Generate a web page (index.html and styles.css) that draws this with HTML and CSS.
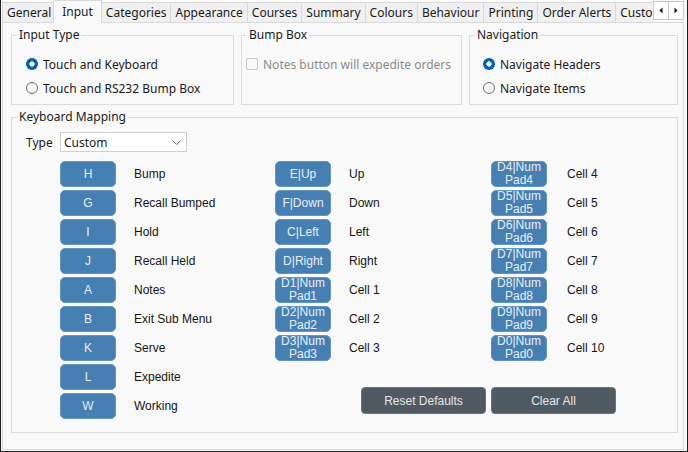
FILE: index.html
```html
<!DOCTYPE html>
<html lang="en">
<head>
<meta charset="utf-8">
<title>Input Settings</title>
<link rel="stylesheet" href="styles.css">
</head>
<body>
<div class="tabstrip">
  <div class="tabs">
    <div class="tab">General</div>
    <div class="tab active">Input</div>
    <div class="tab">Categories</div>
    <div class="tab">Appearance</div>
    <div class="tab">Courses</div>
    <div class="tab">Summary</div>
    <div class="tab">Colours</div>
    <div class="tab">Behaviour</div>
    <div class="tab">Printing</div>
    <div class="tab">Order Alerts</div>
    <div class="tab">Customer Display</div>
  </div>
  <div class="tab-scroll">
    <span class="scroll-btn"><svg width="4" height="7" viewBox="0 0 4 7"><path d="M3.5 0.5 L0.5 3.5 L3.5 6.5 Z" fill="#111"/></svg></span>
    <span class="scroll-btn"><svg width="4" height="7" viewBox="0 0 4 7"><path d="M0.5 0.5 L3.5 3.5 L0.5 6.5 Z" fill="#111"/></svg></span>
  </div>
</div>
<main class="panel">
  <div class="top-row">
    <section class="group">
      <h2 class="group-title">Input Type</h2>
      <label class="option"><span class="radio on"></span>Touch and Keyboard</label>
      <label class="option"><span class="radio"></span>Touch and RS232 Bump Box</label>
    </section>
    <section class="group bump">
      <h2 class="group-title">Bump Box</h2>
      <label class="option disabled"><span class="check"></span>Notes button will expedite orders</label>
    </section>
    <section class="group nav">
      <h2 class="group-title">Navigation</h2>
      <label class="option"><span class="radio on"></span>Navigate Headers</label>
      <label class="option"><span class="radio"></span>Navigate Items</label>
    </section>
  </div>
  <section class="group mapping">
    <h2 class="group-title">Keyboard Mapping</h2>
    <div class="type-row">
      <span class="type-label">Type</span>
      <div class="select"><span>Custom</span><svg class="chev" width="9" height="5" viewBox="0 0 9 5"><path d="M0.5 0.5 L4.5 4.5 L8.5 0.5" fill="none" stroke="#6a6a6a" stroke-width="1"/></svg></div>
    </div>
    <div class="map">
      <div class="col">
        <div class="key-row"><span class="key">H</span><span class="key-label">Bump</span></div>
        <div class="key-row"><span class="key">G</span><span class="key-label">Recall Bumped</span></div>
        <div class="key-row"><span class="key">I</span><span class="key-label">Hold</span></div>
        <div class="key-row"><span class="key">J</span><span class="key-label">Recall Held</span></div>
        <div class="key-row"><span class="key">A</span><span class="key-label">Notes</span></div>
        <div class="key-row"><span class="key">B</span><span class="key-label">Exit Sub Menu</span></div>
        <div class="key-row"><span class="key">K</span><span class="key-label">Serve</span></div>
        <div class="key-row"><span class="key">L</span><span class="key-label">Expedite</span></div>
        <div class="key-row"><span class="key">W</span><span class="key-label">Working</span></div>
      </div>
      <div class="right">
        <div class="cols">
          <div class="col col2">
            <div class="key-row"><span class="key">E|Up</span><span class="key-label">Up</span></div>
            <div class="key-row"><span class="key">F|Down</span><span class="key-label">Down</span></div>
            <div class="key-row"><span class="key">C|Left</span><span class="key-label">Left</span></div>
            <div class="key-row"><span class="key">D|Right</span><span class="key-label">Right</span></div>
            <div class="key-row"><span class="key">D1|Num<br>Pad1</span><span class="key-label">Cell 1</span></div>
            <div class="key-row"><span class="key">D2|Num<br>Pad2</span><span class="key-label">Cell 2</span></div>
            <div class="key-row"><span class="key">D3|Num<br>Pad3</span><span class="key-label">Cell 3</span></div>
          </div>
          <div class="col col3">
            <div class="key-row"><span class="key">D4|Num<br>Pad4</span><span class="key-label">Cell 4</span></div>
            <div class="key-row"><span class="key">D5|Num<br>Pad5</span><span class="key-label">Cell 5</span></div>
            <div class="key-row"><span class="key">D6|Num<br>Pad6</span><span class="key-label">Cell 6</span></div>
            <div class="key-row"><span class="key">D7|Num<br>Pad7</span><span class="key-label">Cell 7</span></div>
            <div class="key-row"><span class="key">D8|Num<br>Pad8</span><span class="key-label">Cell 8</span></div>
            <div class="key-row"><span class="key">D9|Num<br>Pad9</span><span class="key-label">Cell 9</span></div>
            <div class="key-row"><span class="key">D0|Num<br>Pad0</span><span class="key-label">Cell 10</span></div>
          </div>
        </div>
        <div class="actions">
          <button class="action">Reset Defaults</button>
          <button class="action">Clear All</button>
        </div>
      </div>
    </div>
  </section>
</main>
</body>
</html>
```

FILE: styles.css
```css
html, body {
  margin: 0;
  width: 688px;
  height: 452px;
  overflow: hidden;
}

body {
  box-sizing: border-box;
  border: solid #1e1e1e;
  border-width: 0 1px 1px 1px;
  background: #f9f9f9;
  font-family: "Noto Sans", "DejaVu Sans", sans-serif;
  font-size: 12px;
  color: #1a1a1a;
  display: flex;
  flex-direction: column;
}

/* ---------- tabs ---------- */
.tabstrip {
  position: relative;
  z-index: 2;
  height: 22px;
  flex-shrink: 0;
  display: flex;
}

.tabs {
  flex: 1;
  min-width: 0;
  display: flex;
  align-items: flex-end;
  padding-left: 1px;
  overflow-x: clip;
  overflow-y: visible;
}

.tab {
  flex-shrink: 0;
  box-sizing: border-box;
  height: 20px;
  line-height: 18px;
  padding: 1px 4px 0 4px;
  margin-right: -1px;
  border: 1px solid #d9d9d9;
  border-bottom: none;
  background: #f0f0f0;
  white-space: nowrap;
}

.tab.active {
  position: relative;
  z-index: 1;
  height: 23px;
  line-height: 21px;
  margin: 0 -1px -1px -2px;
  padding: 0 8px;
  background: #f9f9f9;
}

.tab-scroll {
  flex-shrink: 0;
  display: flex;
  align-items: flex-start;
  padding: 1px 3px 0 0;
  background: #f9f9f9;
}

.scroll-btn {
  box-sizing: border-box;
  width: 16px;
  height: 19px;
  display: flex;
  align-items: center;
  justify-content: center;
  background: #fdfdfd;
  border: 1px solid #c9c9c9;
}

.scroll-btn + .scroll-btn {
  margin-left: -1px;
}

/* ---------- panel ---------- */
.panel {
  flex: 1;
  margin: 0 3px 1px 1px;
  border: 1px solid #d9d9d9;
  padding: 12px 5px 0 8px;
  background: #f9f9f9;
}

.top-row {
  display: grid;
  grid-template-columns: 223px 221px 1fr;
  column-gap: 7px;
}

.group {
  position: relative;
  border: 1px solid #dcdcdc;
  padding: 16px 6px 4px 14px;
}

.group-title {
  position: absolute;
  top: -9px;
  left: 5px;
  margin: 0;
  padding: 0 2px;
  background: #f9f9f9;
  font-size: 12px;
  font-weight: normal;
  line-height: 15px;
  color: #1a1a1a;
  white-space: nowrap;
}

.group.bump {
  padding-left: 4px;
}

.group.nav {
  padding-left: 13px;
}

.option {
  display: flex;
  align-items: center;
  gap: 5px;
  height: 24px;
  white-space: nowrap;
}

.option.disabled {
  color: #8a8a8a;
}

.radio {
  box-sizing: border-box;
  width: 12px;
  height: 12px;
  border-radius: 50%;
  border: 1px solid #6b6b6b;
  background: #f9f9f9;
  flex-shrink: 0;
}

.radio.on {
  border: 0;
  background: radial-gradient(circle, #ffffff 0 2.4px, #005fb8 2.9px);
}

.check {
  box-sizing: border-box;
  width: 12px;
  height: 12px;
  border-radius: 2px;
  border: 1px solid #c6c6c6;
  background: #f9f9f9;
  flex-shrink: 0;
}

/* ---------- keyboard mapping ---------- */
.group.mapping {
  margin-top: 12px;
  padding: 14px 6px 13px 14px;
}

.type-row {
  display: flex;
  align-items: center;
  height: 20px;
  margin-bottom: 9px;
}

.type-label {
  width: 34px;
}

.select {
  box-sizing: border-box;
  width: 127px;
  height: 20px;
  border: 1px solid #cfcfcf;
  background: #ffffff;
  display: flex;
  align-items: center;
  justify-content: space-between;
  padding: 0 5px 0 3px;
}

.chev {
  display: block;
}

.map {
  display: flex;
  margin-left: 34px;
}

.col {
  flex-shrink: 0;
  display: flex;
  flex-direction: column;
  gap: 3px;
  width: 215px;
}

.col2 {
  width: 216px;
}

.col3 {
  width: auto;
}

.cols {
  display: flex;
}

.key-row {
  display: flex;
  align-items: center;
  gap: 18px;
  height: 26px;
}

.col3 .key-row {
  gap: 20px;
}

.key {
  box-sizing: border-box;
  width: 56px;
  height: 26px;
  flex-shrink: 0;
  display: flex;
  align-items: center;
  justify-content: center;
  text-align: center;
  border-radius: 5px;
  background: #4680b3;
  border: 1px solid #6494c0;
  color: #e8eef5;
  font-family: "Liberation Sans", Arial, sans-serif;
  font-size: 12px;
  line-height: 13px;
}

.key-label {
  font-family: "Liberation Sans", Arial, sans-serif;
  font-size: 12px;
  color: #151515;
  white-space: nowrap;
}

.actions {
  display: flex;
  gap: 5px;
  margin-top: 26px;
  padding-left: 86px;
}

.action {
  box-sizing: border-box;
  width: 125px;
  height: 27px;
  padding: 0;
  border-radius: 4px;
  border: 1px solid #6a747b;
  background: #4f5a63;
  color: #e6e6e6;
  font-family: "Liberation Sans", Arial, sans-serif;
  font-size: 12px;
}
```
